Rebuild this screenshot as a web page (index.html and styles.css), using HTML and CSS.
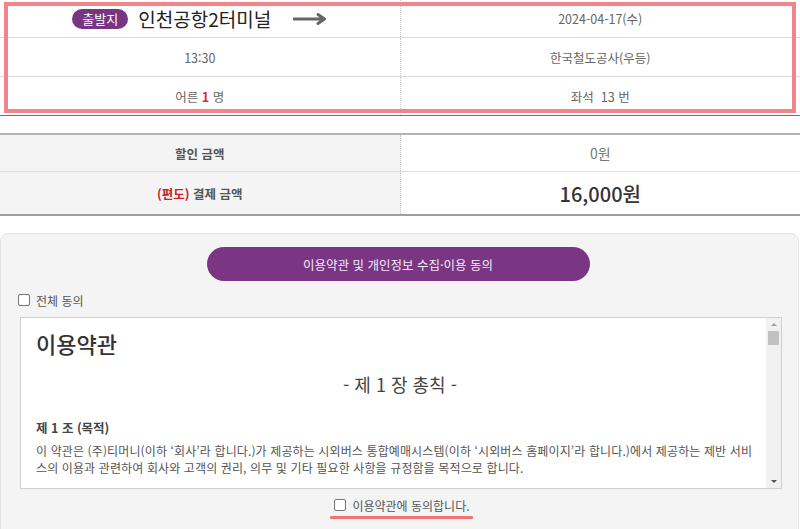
FILE: index.html
```html
<!DOCTYPE html>
<html lang="ko">
<head>
<meta charset="utf-8">
<link rel="stylesheet" href="styles.css">
</head>
<body>
<div class="page">
  <div class="trip">
    <div class="row r1">
      <div class="cell left">
        <span class="badge">출발지</span>
        <span class="place">인천공항2터미널</span>
        <svg class="arrow" width="34" height="12" viewBox="0 0 34 12"><path d="M1 6 H31 M25 1.5 L31.5 6 L25 10.5" fill="none" stroke="#666" stroke-width="3" stroke-linecap="round" stroke-linejoin="round"/></svg>
      </div>
      <div class="cell">2024-04-17(수)</div>
    </div>
    <div class="row r2">
      <div class="cell left">13:30</div>
      <div class="cell">한국철도공사(우등)</div>
    </div>
    <div class="row r3">
      <div class="cell left"><span>어른 <b class="red">1</b> 명</span></div>
      <div class="cell"><span>좌석 &nbsp;13 번</span></div>
    </div>
    <div class="hl-box"></div>
  </div>

  <div class="price">
    <div class="prow p1">
      <div class="pcell label">할인 금액</div>
      <div class="pcell val">0원</div>
    </div>
    <div class="prow p2">
      <div class="pcell label"><span><span class="red">(편도)</span> 결제 금액</span></div>
      <div class="pcell val big">16,000원</div>
    </div>
  </div>

  <div class="panel">
    <div class="btnwrap"><div class="pill">이용약관 및 개인정보 수집·이용 동의</div></div>
    <label class="all"><span class="cb"></span>전체 동의</label>
    <div class="terms">
      <div class="tcontent">
        <h1 class="ttitle">이용약관</h1>
        <h2 class="chap">- 제 1 장 총칙 -</h2>
        <h3 class="art">제 1 조 (목적)</h3>
        <p class="para">이 약관은 (주)티머니(이하 ‘회사’라 합니다.)가 제공하는 시외버스 통합예매시스템(이하 ‘시외버스 홈페이지’라 합니다.)에서 제공하는 제반 서비스의 이용과 관련하여 회사와 고객의 권리, 의무 및 기타 필요한 사항을 규정함을 목적으로 합니다.</p>
      </div>
      <div class="sbar">
        <div class="sarrow up"></div>
        <div class="thumb"></div>
        <div class="strack"></div>
        <div class="sarrow down"></div>
      </div>
    </div>
    <div class="agree">
      <label class="agreelbl"><span class="cb"></span>이용약관에 동의합니다.<span class="uline"></span></label>
    </div>
  </div>
</div>
</body>
</html>
```
FILE: styles.css
```css
html, body { margin: 0; padding: 0; background: #fff; }
body { font-family: "Noto Sans CJK KR", "Noto Sans", sans-serif; color: #555; width: 800px; height: 529px; overflow: hidden; }
.page { width: 800px; }

.trip { position: relative; border-bottom: 1px solid #7d6e74; }
.row { display: flex; }
.r1 { height: 37px; border-bottom: 1px solid #dcdcdc; }
.r2 { height: 38px; border-bottom: 1px solid #dcdcdc; }
.r3 { height: 38px; }
.cell { flex: 1; display: flex; align-items: center; justify-content: center; font-size: 12.5px; color: #666; }
.cell.left { border-right: 1px dotted #c8c8c8; }
.red { color: #c8202a; font-weight: normal; }
.r3 .red { font-weight: bold; color: #c8323c; }
.badge { background: #773682; color: #fff; font-size: 13px; line-height: 20px; height: 20px; padding: 0 10px; border-radius: 11px; }
.place { font-size: 19px; color: #222; margin-left: 10px; line-height: 24px; }
.arrow { margin-left: 22px; }
.hl-box { position: absolute; left: 4px; top: 2px; border: 4px solid #f3848a; box-sizing: border-box; width: 792px; height: 111px; pointer-events: none; }

.price { margin-top: 17px; border-top: 2px solid #b4b4b4; border-bottom: 2px solid #9e9e9e; }
.prow { display: flex; }
.p1 { height: 36px; border-bottom: 1px solid #dedede; }
.p2 { height: 42px; }
.pcell { flex: 1; display: flex; align-items: center; justify-content: center; }
.label { background: #f4f4f4; font-size: 12.5px; font-weight: bold; color: #555; border-right: 1px dotted #c8c8c8; }
.label .red { color: #c8202a; font-weight: bold; }
.val { font-size: 14px; color: #777; }
.val.big { font-size: 20px; color: #333; font-weight: 500; }

.panel { margin-top: 17px; width: 799px; box-sizing: border-box; background: #f4f4f4; border: 1px solid #e2e2e2; border-radius: 8px; padding: 13px 16px 0 19px; height: 320px; }
.btnwrap { display: flex; justify-content: center; }
.pill { width: 383px; height: 34px; border-radius: 17px; background: #7a3683; color: #f4eaf6; font-size: 12.5px; display: flex; align-items: center; justify-content: center; margin-left: -6px; }
.all { display: flex; align-items: center; font-size: 12px; color: #555; margin-top: 11px; margin-left: -2px; height: 16px; }
.cb { border: 1px solid #777; border-radius: 2px; background: #fff; margin-right: 6px; display: inline-block; box-sizing: border-box; width: 12px; height: 12px; }
.terms { margin-top: 9px; height: 172px; width: 762px; box-sizing: border-box; border: 1px solid #cfcfcf; background: #fff; display: flex; overflow: hidden; }
.tcontent { flex: 1; padding: 8px 12px 0 15px; overflow: hidden; }
.ttitle { margin: 0; font-size: 22px; font-weight: 500; color: #333; line-height: 34px; }
.chap { margin: 12px 0 0; font-size: 18px; font-weight: 400; color: #444; text-align: center; line-height: 24px; padding-left: 10px; }
.art { margin: 23px 0 0; font-size: 12.5px; font-weight: bold; color: #444; line-height: 18px; }
.para { margin: 5px 0 0; font-size: 12px; color: #555; line-height: 17px; letter-spacing: 0.12px; }
.sbar { width: 15px; background: #f1f1f1; display: flex; flex-direction: column; align-items: center; }
.sarrow { width: 0; height: 0; border-left: 3px solid transparent; border-right: 3px solid transparent; margin: 5px 0; }
.sarrow.up { border-bottom: 3px solid #a3a3a3; }
.sarrow.down { border-top: 3px solid #505050; }
.thumb { width: 11px; height: 14px; background: #c1c1c1; }
.strack { flex: 1; }
.agree { display: flex; justify-content: center; margin-top: 7px; padding-left: 2px; }
.agreelbl { position: relative; display: flex; align-items: center; font-size: 12px; color: #555; height: 18px; }
.uline { position: absolute; left: -4px; right: -3px; bottom: -5px; height: 3px; background: #f0747a; border-radius: 1px; }
```
